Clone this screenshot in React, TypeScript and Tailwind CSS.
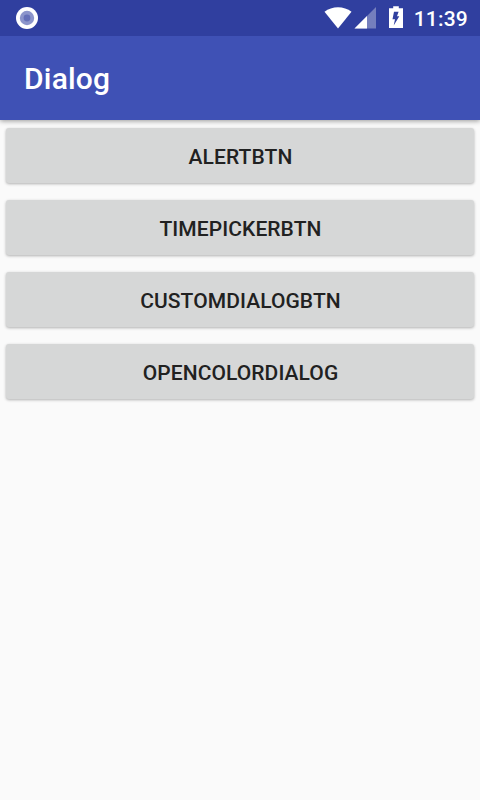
const labels = ["AlertBtn", "TimePickerBtn", "CustomDialogBtn", "OpenColorDialog"];

function StatusBar() {
  return (
    <div className="relative z-10 flex h-9 items-center bg-[#303f9f] pl-4 pr-3 text-white">
      <svg width="22" height="22" viewBox="0 0 22 22">
        <circle cx="11" cy="11" r="11" fill="#fff" />
        <circle cx="11" cy="11" r="7.2" fill="#8c95cb" />
        <circle cx="11" cy="11" r="3.4" fill="#6570b8" />
      </svg>
      <svg className="ml-auto" width="28" height="22" viewBox="0 0 28 22">
        <path d="M0.5 4.7C8 -1.4 20 -1.4 27.5 4.7L14 21.5Z" fill="#fff" />
      </svg>
      <svg className="ml-0.5" width="22" height="22" viewBox="0 0 22 22">
        <path d="M22 0V21.5H0.5Z" fill="#757fbd" />
        <path d="M13 9V21.5H0.5Z" fill="#fff" />
      </svg>
      <svg className="ml-[13px]" width="14" height="24" viewBox="0 -1 14 24">
        <path d="M4.2 -0.8H9.8V1.3H14V21H0V1.3H4.2Z" fill="#fff" />
        <path d="M5 4.8H9.6L8 9.3H10.3L4.7 18.6L6 12.2H3.5Z" fill="#303f9f" />
      </svg>
      <span className="ml-[11px] pt-px text-[21px] leading-9 font-medium tracking-[0.2px]">11:39</span>
    </div>
  );
}

export default function App() {
  return (
    <div className="h-[800px] w-[480px] bg-[#fafafa] font-['Roboto',sans-serif]">
      <StatusBar />
      <header className="flex h-[84px] items-center bg-[#3f51b5] px-6 pt-0.5 shadow-[0_1px_5px_rgba(0,0,0,0.4)]">
        <h1 className="text-[30px] leading-none font-medium tracking-[0.2px] text-white">Dialog</h1>
      </header>
      <main className="flex flex-col gap-[17px] px-1.5 pt-2">
        {labels.map((label) => (
          <button
            key={label}
            className="h-[55px] rounded-[3px] bg-[#d6d7d7] pt-1 pl-px text-[21px] font-medium tracking-[0.08px] text-[#212121] uppercase shadow-[0_1px_3px_rgba(0,0,0,0.3)]"
          >
            {label}
          </button>
        ))}
      </main>
    </div>
  );
}
